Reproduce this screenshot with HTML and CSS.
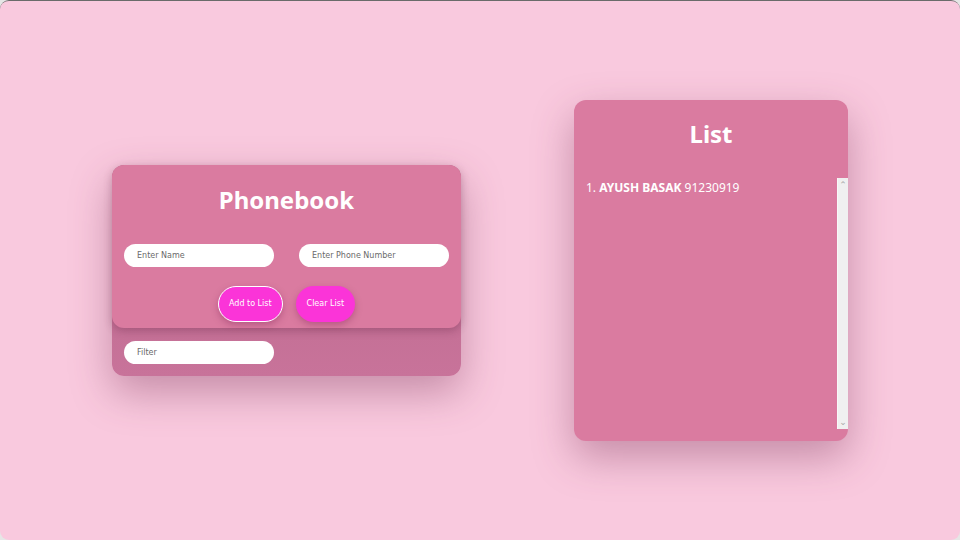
FILE: index.html
```html
<!DOCTYPE html>
<html>
<head>
<meta charset="utf-8">
<link rel="stylesheet" href="styles.css">
</head>
<body>
<div class="screen">
  <section class="phonebook">
    <div class="form-card">
      <h1 class="title">Phonebook</h1>
      <div class="inputs">
        <input class="field" type="text" placeholder="Enter Name">
        <input class="field" type="text" placeholder="Enter Phone Number">
      </div>
      <div class="buttons">
        <button class="btn btn-add">Add to List</button>
        <button class="btn">Clear List</button>
      </div>
    </div>
    <div class="filter-row">
      <input class="field" type="text" placeholder="Filter">
    </div>
  </section>
  <section class="list-card">
    <h1 class="title">List</h1>
    <div class="list-area">
      <ol class="entries">
        <li><b>AYUSH BASAK</b> 91230919</li>
      </ol>
      <div class="scrollbar">
        <span class="arrow">&#8963;</span>
        <span class="arrow down">&#8964;</span>
      </div>
    </div>
  </section>
</div>
</body>
</html>
```
FILE: styles.css
```css
html {
  background: #e6e6e6;
}
body {
  margin: 0;
  width: 960px;
  height: 540px;
  overflow: hidden;
}
.screen {
  box-sizing: border-box;
  width: 960px;
  height: 540px;
  background: #f9c9de;
  border-top: 1px solid #6a6a6a;
  border-radius: 9px;
  display: flex;
  align-items: center;
  justify-content: center;
  gap: 113px;
  padding-bottom: 1px;
}
.title {
  margin: 0;
  font-family: "Noto Sans", "Open Sans", sans-serif;
  font-weight: 700;
  font-size: 24px;
  line-height: 30px;
  color: #ffffff;
  text-align: center;
}
.phonebook {
  width: 349px;
  border-radius: 12px;
  background: linear-gradient(#b9688a, #c8739a);
  box-shadow: 0 16px 40px rgba(120, 50, 85, 0.4);
}
.form-card {
  box-sizing: border-box;
  height: 163px;
  padding: 20px 12px 0;
  border-radius: 12px;
  background: #da7ba0;
  box-shadow: 0 3px 8px rgba(90, 30, 60, 0.3);
  position: relative;
}
.inputs {
  display: flex;
  justify-content: space-between;
  margin-top: 29px;
}
.field {
  box-sizing: border-box;
  width: 150px;
  height: 23px;
  border: none;
  border-radius: 12px;
  background: #ffffff;
  padding: 0 13px;
  font-family: "DejaVu Sans", Verdana, sans-serif;
  font-size: 8px;
  color: #333;
  outline: none;
}
.field::placeholder {
  color: #6a6a6a;
}
.buttons {
  display: flex;
  justify-content: center;
  gap: 13px;
  margin-top: 19px;
}
.btn {
  height: 36px;
  padding: 0 11px;
  border: none;
  border-radius: 18px;
  background: #fb34d8;
  color: #ffffff;
  font-family: "DejaVu Sans", Verdana, sans-serif;
  font-size: 8px;
  box-shadow: 0 3px 7px rgba(120, 30, 80, 0.35);
}
.btn-add {
  border: 1px solid #ffffff;
  padding: 0 10px;
}
.filter-row {
  padding: 13px 12px 12px;
  display: flex;
}
.list-card {
  box-sizing: border-box;
  width: 274px;
  height: 341px;
  padding-top: 19px;
  border-radius: 12px;
  background: #da7ba0;
  box-shadow: 0 16px 40px rgba(120, 50, 85, 0.4);
  display: flex;
  flex-direction: column;
}
.list-area {
  display: flex;
  margin-top: 29px;
  height: 251px;
}
.entries {
  flex: 1;
  margin: 0;
  padding: 0 0 0 12px;
  list-style-position: inside;
  font-family: "Noto Sans", "Open Sans", sans-serif;
  font-size: 12px;
  line-height: 20px;
  color: #ffffff;
}
.scrollbar {
  box-sizing: border-box;
  width: 11px;
  background: #f0f0f0;
  border-left: 1px solid #f8f8f8;
  display: flex;
  flex-direction: column;
  justify-content: space-between;
  align-items: center;
  padding: 2px 0;
  font-family: "DejaVu Sans", sans-serif;
  font-size: 9px;
  line-height: 10px;
  color: #a8a8a8;
}
.arrow {
  display: block;
}
```
